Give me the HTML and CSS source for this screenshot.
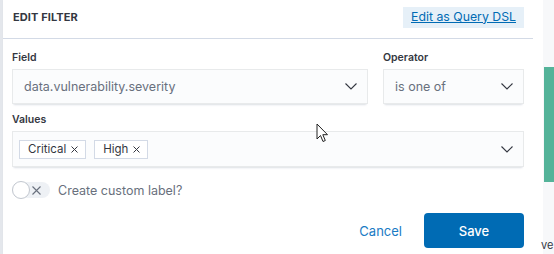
FILE: index.html
```html
<!DOCTYPE html>
<html>
<head>
<meta charset="utf-8">
<link rel="stylesheet" href="styles.css">
</head>
<body>
<div class="page">
  <div class="edge"></div>
  <div class="popover">
    <div class="header">
      <span class="title">EDIT FILTER</span>
      <a class="dsl" href="#">Edit as Query DSL</a>
    </div>
    <div class="content">
      <div class="row">
        <div class="field grow">
          <div class="label">Field</div>
          <div class="control">
            <span class="value">data.vulnerability.severity</span>
            <svg class="chev" width="12" height="7" viewBox="0 0 12 7"><path d="M0.5 0.5 L6 6 L11.5 0.5" fill="none" stroke="#343741" stroke-width="1.1"/></svg>
          </div>
        </div>
        <div class="field op">
          <div class="label">Operator</div>
          <div class="control">
            <span class="value">is one of</span>
            <svg class="chev" width="12" height="7" viewBox="0 0 12 7"><path d="M0.5 0.5 L6 6 L11.5 0.5" fill="none" stroke="#343741" stroke-width="1.1"/></svg>
          </div>
        </div>
      </div>
      <div class="field">
        <div class="label">Values</div>
        <div class="control combo">
          <div class="chips">
            <span class="chip">Critical <svg width="7" height="7" viewBox="0 0 7 7"><path d="M0.5 0.5 L6.5 6.5 M6.5 0.5 L0.5 6.5" stroke="#343741" stroke-width="1"/></svg></span>
            <span class="chip">High <svg width="7" height="7" viewBox="0 0 7 7"><path d="M0.5 0.5 L6.5 6.5 M6.5 0.5 L0.5 6.5" stroke="#343741" stroke-width="1"/></svg></span>
          </div>
          <svg class="chev" width="12" height="7" viewBox="0 0 12 7"><path d="M0.5 0.5 L6 6 L11.5 0.5" fill="none" stroke="#343741" stroke-width="1.1"/></svg>
        </div>
      </div>
      <div class="switch-row">
        <span class="switch">
          <span class="knob"></span>
          <svg class="swx" width="9" height="9" viewBox="0 0 9 9"><path d="M0.5 0.5 L8.5 8.5 M8.5 0.5 L0.5 8.5" stroke="#69707d" stroke-width="1.1"/></svg>
        </span>
        <span class="switch-label">Create custom label?</span>
      </div>
      <div class="footer">
        <a class="cancel" href="#">Cancel</a>
        <button class="save">Save</button>
      </div>
    </div>
    <svg class="cursor" width="13" height="20" viewBox="0 0 13 20"><path d="M1 1 L1 16 L4.5 12.5 L7 18.5 L9.3 17.5 L6.8 11.7 L11.5 11.7 Z" fill="#fff" stroke="#222" stroke-width="1" stroke-linejoin="round"/></svg>
  </div>
  <div class="side">
    <div class="green"></div>
    <span class="ve">ve</span>
  </div>
</div>
</body>
</html>
```

FILE: styles.css
```css
* { box-sizing: border-box; }
html, body { margin: 0; padding: 0; }
body {
  width: 554px;
  height: 254px;
  overflow: hidden;
  background: #f5f7fa;
  font-family: Inter, "Noto Sans", sans-serif;
  color: #343741;
}
.page {
  display: flex;
  height: 254px;
}
.edge {
  width: 3px;
  background: #e4e7ec;
  flex: none;
}
.popover {
  position: relative;
  width: 540px;
  flex: none;
  background: #fff;
  box-shadow: 1px 0 2px rgba(0,0,0,0.12);
  display: flex;
  flex-direction: column;
}
.header {
  height: 39px;
  margin-right: 10px;
  border-bottom: 1px solid #d3dae6;
  display: flex;
  align-items: center;
  justify-content: space-between;
  padding: 0 9px 4px 10px;
}
.title {
  font-size: 11px;
  font-weight: 700;
  color: #343741;
  letter-spacing: 0.1px;
}
.dsl {
  background: #e6f0f8;
  color: #006bb4;
  font-size: 12.3px;
  text-decoration: underline;
  padding: 3px 8px 4px 8px;
  line-height: 14px;
}
.content {
  padding: 12px 19px 0 9px;
  display: flex;
  flex-direction: column;
}
.row {
  display: flex;
  gap: 15px;
}
.grow { flex: 1; }
.op { width: 141px; flex: none; }
.field {
  display: flex;
  flex-direction: column;
}
.label {
  font-size: 10.5px;
  font-weight: 600;
  line-height: 14px;
  margin-bottom: 4px;
  color: #343741;
}
.control {
  height: 35px;
  background: #fbfcfd;
  box-shadow: inset 0 0 0 1px rgba(16,22,26,0.08), 0 1px 1px -1px rgba(152,162,179,0.3), 0 3px 2px -2px rgba(152,162,179,0.3);
  display: flex;
  align-items: center;
  justify-content: space-between;
  padding: 0 11px 0 12px;
}
.value {
  font-size: 12.5px;
  color: #69707d;
}
.row + .field { margin-top: 9px; }
.combo {
  height: 36px;
  padding-left: 7px;
}
.chips {
  display: flex;
  gap: 8px;
}
.chip {
  height: 19px;
  display: inline-flex;
  align-items: center;
  gap: 5px;
  border: 1px solid #d3dae6;
  background: #fff;
  font-size: 11.5px;
  color: #343741;
  padding: 0 7px 0 8px;
}
.switch-row {
  margin-top: 15px;
  display: flex;
  align-items: center;
  gap: 8px;
  height: 16px;
}
.switch {
  position: relative;
  width: 38px;
  height: 16px;
  border-radius: 8px;
  background: #eef1f5;
  display: flex;
  align-items: center;
  justify-content: flex-end;
  padding-right: 9px;
}
.knob {
  position: absolute;
  left: 0;
  top: -1px;
  width: 18px;
  height: 18px;
  border-radius: 50%;
  background: #fff;
  border: 1px solid #c2c7cf;
}
.switch-label {
  font-size: 12.5px;
  color: #69707d;
}
.footer {
  margin-top: 15px;
  display: flex;
  justify-content: flex-end;
  align-items: center;
  gap: 22px;
}
.cancel {
  color: #1a7bc4;
  font-size: 13px;
  text-decoration: none;
}
.save {
  width: 100px;
  height: 35px;
  border: none;
  border-radius: 4px;
  background: #006bb4;
  color: #fff;
  font-family: Inter, "Noto Sans", sans-serif;
  font-size: 13px;
  font-weight: 500;
}
.cursor {
  position: absolute;
  left: 313px;
  top: 123px;
}
.side {
  position: relative;
  flex: 1;
  background: #f7f8fa;
}
.green {
  position: absolute;
  left: 1px;
  top: 67px;
  width: 20px;
  height: 115px;
  background: #54b399;
}
.ve {
  position: absolute;
  left: -2px;
  top: 238px;
  font-size: 11px;
  color: #343741;
}
```
